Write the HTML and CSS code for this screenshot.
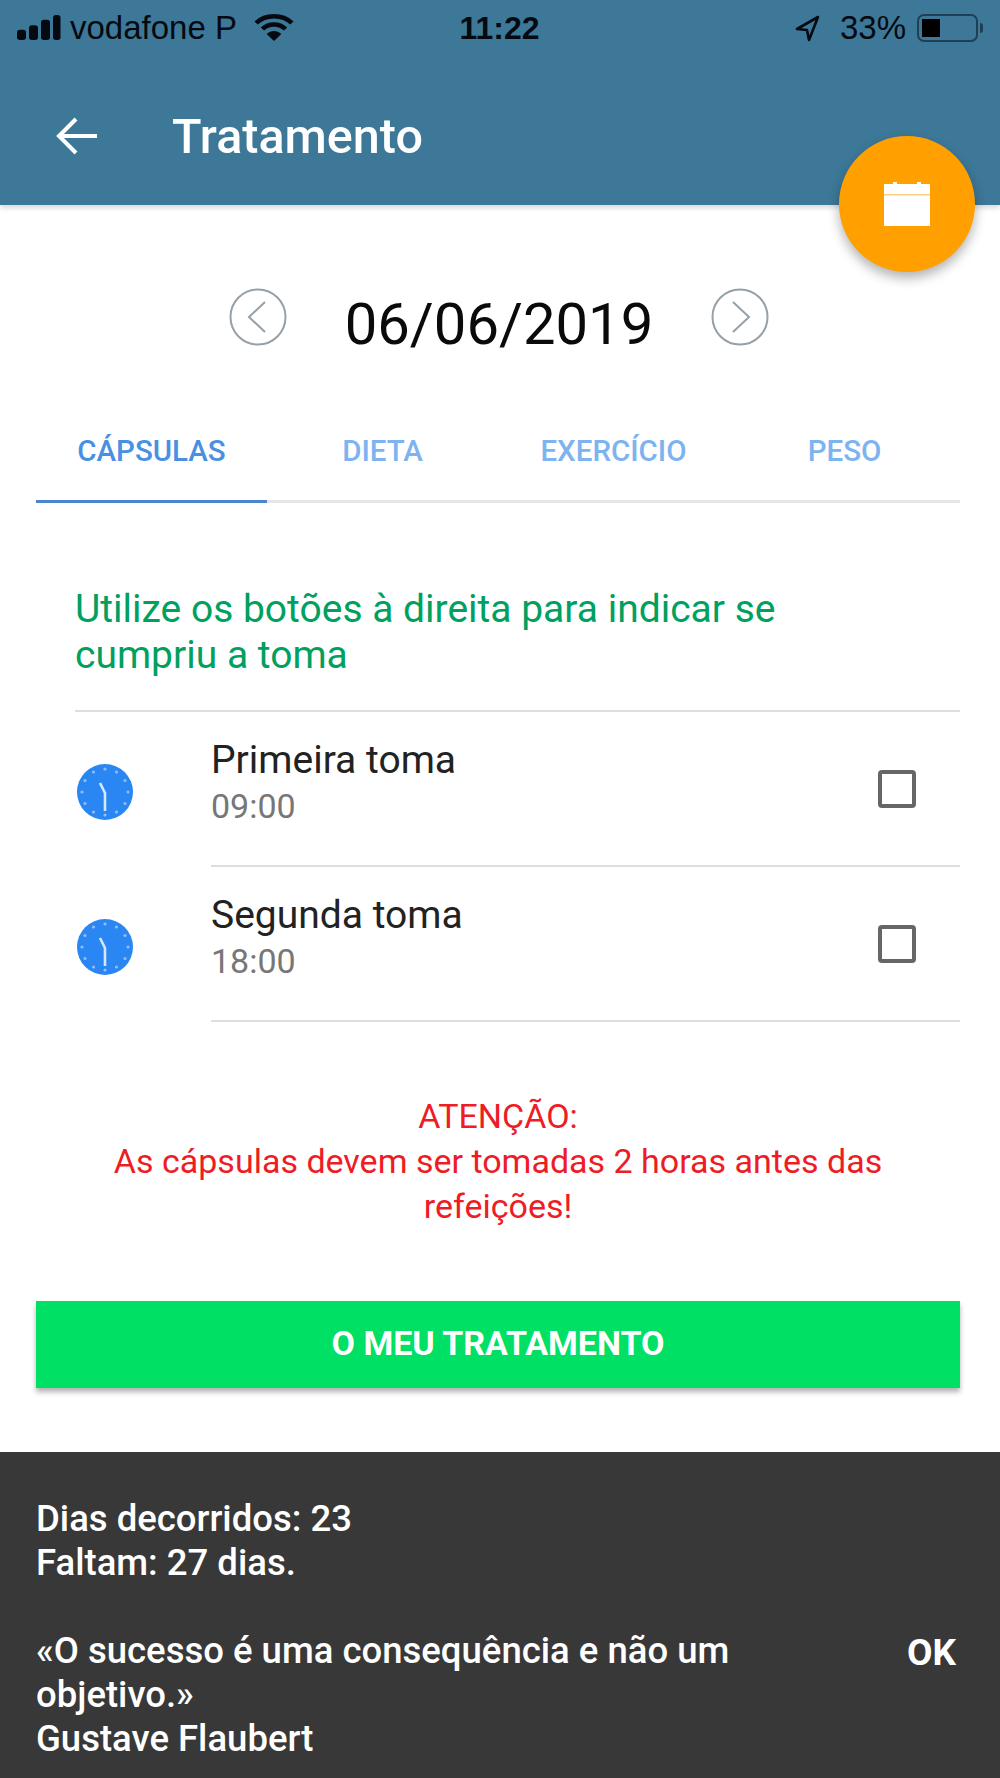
FILE: index.html
```html
<!DOCTYPE html>
<html lang="pt">
<head>
    <meta charset="UTF-8">
    <title>Tratamento</title>
    <link rel="stylesheet" href="styles.css">
</head>
<body>
    <header class="topo">
        <!-- Barra de estado -->
        <div class="estado">
            <div class="estado-lado">
                <svg class="sinal" width="45" height="26" viewBox="0 0 45 28" preserveAspectRatio="none">
                    <rect x="1" y="16" width="9" height="11" rx="3"/>
                    <rect x="13" y="11" width="9" height="16" rx="3"/>
                    <rect x="25" y="5" width="9" height="22" rx="3"/>
                    <rect x="37" y="0" width="7.5" height="27" rx="3"/>
                </svg>
                <span class="operadora">vodafone P</span>
                <svg class="wifi" width="40" height="28" viewBox="0 0 38 28" preserveAspectRatio="none">
                    <path d="M2 9 C11 0 27 0 36 9" fill="none" stroke="#050a10" stroke-width="4.5"/>
                    <path d="M8 15 C14 9 24 9 30 15" fill="none" stroke="#050a10" stroke-width="4.5"/>
                    <path d="M12 20 C16 16 22 16 26 20 L19 27 Z" fill="#050a10"/>
                </svg>
            </div>
            <div class="hora">11:22</div>
            <div class="estado-lado direita">
                <svg class="local" width="26" height="28" viewBox="0 0 26 28">
                    <path d="M24 3 L3 15 L13 16 L15 26 Z" fill="none" stroke="#050a10" stroke-width="2.6" stroke-linejoin="round"/>
                </svg>
                <span class="bateria-pct">33%</span>
                <div class="bateria"><div class="bateria-nivel"></div></div>
                <div class="bateria-ponta"></div>
            </div>
        </div>
        <div class="barra">
            <svg class="voltar" width="42" height="40" viewBox="0 0 42 40">
                <path d="M20 3 L3 20 L20 37 M3 20 L41 20" fill="none" stroke="#fff" stroke-width="4"/>
            </svg>
            <h1>Tratamento</h1>
        </div>
        <button class="fab" type="button">
            <svg width="46" height="44" viewBox="0 0 46 44">
                <rect x="0" y="2" width="46" height="42" fill="#fff"/>
                <rect x="0" y="12" width="46" height="1.5" fill="#ffcf80"/>
                <rect x="9" y="0" width="4" height="5" fill="#fff"/>
                <rect x="33" y="0" width="4" height="5" fill="#fff"/>
            </svg>
        </button>
    </header>

    <main class="conteudo">
        <div class="data">
            <div class="seta">
                <svg width="58" height="58" viewBox="0 0 58 58">
                    <circle cx="29" cy="29" r="27.5" fill="none" stroke="#96a0a8" stroke-width="2"/>
                    <path d="M36 14 L20 29 L36 44" fill="none" stroke="#96a0a8" stroke-width="2"/>
                </svg>
            </div>
            <div class="data-texto">06/06/2019</div>
            <div class="seta">
                <svg width="58" height="58" viewBox="0 0 58 58">
                    <circle cx="29" cy="29" r="27.5" fill="none" stroke="#96a0a8" stroke-width="2"/>
                    <path d="M22 14 L38 29 L22 44" fill="none" stroke="#96a0a8" stroke-width="2"/>
                </svg>
            </div>
        </div>

        <nav class="tabs">
            <div class="tab ativo">CÁPSULAS</div>
            <div class="tab">DIETA</div>
            <div class="tab">EXERCÍCIO</div>
            <div class="tab">PESO</div>
        </nav>

        <p class="instrucao">Utilize os botões à direita para indicar se cumpriu a toma</p>

        <ul class="lista">
            <li class="toma">
                <svg class="relogio" width="56" height="56" viewBox="0 0 56 56">
                    <circle cx="28" cy="28" r="28" fill="#2a86f2"/>
                    <g fill="#8fbdf6">
                        <circle cx="28" cy="5" r="1.6"/><circle cx="28" cy="51" r="1.6"/>
                        <circle cx="5" cy="28" r="1.6"/><circle cx="51" cy="28" r="1.6"/>
                        <circle cx="16.500" cy="8" r="1.6"/><circle cx="39.500" cy="8" r="1.6"/>
                        <circle cx="16.500" cy="48" r="1.6"/><circle cx="39.500" cy="48" r="1.6"/>
                        <circle cx="8" cy="16.500" r="1.6"/><circle cx="48" cy="16.500" r="1.6"/>
                        <circle cx="8" cy="39.500" r="1.6"/><circle cx="48" cy="39.500" r="1.6"/>
                    </g>
                    <path d="M23 19 L28 29 L28 47" fill="none" stroke="#d6e8fc" stroke-width="2.6"/>
                </svg>
                <div class="toma-texto">
                    <div class="toma-titulo">Primeira toma</div>
                    <div class="toma-hora">09:00</div>
                </div>
                <div class="caixa"></div>
            </li>
            <li class="toma">
                <svg class="relogio" width="56" height="56" viewBox="0 0 56 56">
                    <circle cx="28" cy="28" r="28" fill="#2a86f2"/>
                    <g fill="#8fbdf6">
                        <circle cx="28" cy="5" r="1.6"/><circle cx="28" cy="51" r="1.6"/>
                        <circle cx="5" cy="28" r="1.6"/><circle cx="51" cy="28" r="1.6"/>
                        <circle cx="16.500" cy="8" r="1.6"/><circle cx="39.500" cy="8" r="1.6"/>
                        <circle cx="16.500" cy="48" r="1.6"/><circle cx="39.500" cy="48" r="1.6"/>
                        <circle cx="8" cy="16.500" r="1.6"/><circle cx="48" cy="16.500" r="1.6"/>
                        <circle cx="8" cy="39.500" r="1.6"/><circle cx="48" cy="39.500" r="1.6"/>
                    </g>
                    <path d="M23 19 L28 29 L28 47" fill="none" stroke="#d6e8fc" stroke-width="2.6"/>
                </svg>
                <div class="toma-texto">
                    <div class="toma-titulo">Segunda toma</div>
                    <div class="toma-hora">18:00</div>
                </div>
                <div class="caixa"></div>
            </li>
        </ul>

        <p class="aviso">ATENÇÃO:<br>As cápsulas devem ser tomadas 2 horas antes das refeições!</p>

        <button class="botao" type="button">O MEU TRATAMENTO</button>
    </main>

    <footer class="rodape">
        <div class="rodape-texto">
            Dias decorridos: 23<br>
            Faltam: 27 dias.<br>
            <br>
            «O sucesso é uma consequência e não um objetivo.»<br>
            Gustave Flaubert
        </div>
        <div class="ok">OK</div>
    </footer>
</body>
</html>
```

FILE: styles.css
```css
* {
    box-sizing: border-box;
}

html, body {
    margin: 0;
    padding: 0;
}

body {
    width: 1000px;
    height: 1778px;
    overflow: hidden;
    font-family: Roboto, "Liberation Sans", sans-serif;
    background-color: #ffffff;
    display: flex;
    flex-direction: column;
}

/* Topo */
.topo {
    position: relative;
    height: 205px;
    background-color: #3d7898;
    box-shadow: 0 3px 5px rgba(0, 0, 0, 0.15);
    flex-shrink: 0;
    z-index: 2;
}

.estado {
    height: 56px;
    padding: 0 17px 0 16px;
    display: flex;
    justify-content: space-between;
    align-items: center;
    color: #050a10;
    font-family: "Liberation Sans", sans-serif;
    font-size: 33px;
}

.estado-lado {
    width: 330px;
    display: flex;
    align-items: center;
}

.direita {
    justify-content: flex-end;
}

.sinal {
    fill: #050a10;
    margin-right: 9px;
}

.wifi {
    margin-left: 17px;
}

.hora {
    font-weight: 700;
    font-size: 32px;
}

.local {
    margin-right: 20px;
}

.bateria-pct {
    margin-right: 11px;
}

.bateria {
    width: 61px;
    height: 28px;
    border: 2px solid #1f3f55;
    border-radius: 7px;
    padding: 3px;
}

.bateria-nivel {
    width: 18px;
    height: 100%;
    background-color: #000000;
}

.bateria-ponta {
    width: 3px;
    height: 10px;
    margin-left: 2px;
    background-color: #1f3f55;
    border-radius: 0 3px 3px 0;
}

.barra {
    height: 112px;
    margin-top: 24px;
    padding-left: 56px;
    display: flex;
    align-items: center;
}

.voltar {
    flex-shrink: 0;
}

.barra h1 {
    margin: 0 0 0 74px;
    font-size: 48.5px;
    font-weight: 500;
    color: #ffffff;
}

.fab {
    position: absolute;
    left: 839px;
    top: 136px;
    width: 136px;
    height: 136px;
    border: none;
    border-radius: 50%;
    background-color: #ff9f00;
    box-shadow: 0 6px 12px rgba(0, 0, 0, 0.3);
    padding: 0;
    display: flex;
    align-items: center;
    justify-content: center;
}

/* Conteudo */
.conteudo {
    flex: 1;
    padding: 0 40px 0 36px;
}

.data {
    height: 152px;
    padding: 76px 0 0 193px;
    display: flex;
    align-items: center;
}

.data-texto {
    width: 424px;
    padding-top: 9px;
    text-align: center;
    font-size: 58px;
    color: #0a0a0a;
}

.tabs {
    display: flex;
    height: 146px;
    padding-top: 48px;
    border-bottom: 3px solid #e6e6e8;
}

.tab {
    width: 231px;
    height: 98px;
    margin-bottom: -3px;
    padding-top: 29px;
    text-align: center;
    font-size: 29.5px;
    font-weight: 500;
    color: #7db3f0;
}

.tab.ativo {
    color: #4a90e2;
    border-bottom: 3px solid #4a86d0;
}

.instrucao {
    margin: 83px 60px 0 39px;
    font-size: 39px;
    line-height: 46px;
    color: #00a05f;
}

.lista {
    list-style: none;
    margin: 32px 0 0 39px;
    padding: 0;
    border-top: 2px solid #dedede;
}

.toma {
    display: flex;
    align-items: center;
    height: 155px;
    position: relative;
}

.toma::after {
    content: "";
    position: absolute;
    left: 136px;
    right: 0;
    bottom: 0;
    height: 2px;
    background-color: #dedede;
}

.relogio {
    flex-shrink: 0;
    margin: 0 0 -4px 2px;
}

.toma-texto {
    margin-left: 78px;
    flex: 1;
    padding-bottom: 14px;
}

.toma-titulo {
    font-size: 39px;
    line-height: 46px;
    color: #222222;
}

.toma-hora {
    font-size: 34px;
    line-height: 46px;
    color: #777777;
}

.caixa {
    width: 38px;
    height: 38px;
    margin: 0 44px 2px 0;
    border: 4px solid #666666;
    border-radius: 4px;
}

.aviso {
    margin: 72px 60px 0 60px;
    text-align: center;
    font-size: 34px;
    line-height: 45px;
    color: #ee1c25;
}

.botao {
    display: block;
    width: 100%;
    height: 87px;
    margin-top: 72px;
    padding: 0 0 4px;
    border: none;
    background-color: #00e064;
    box-shadow: 0 4px 5px rgba(0, 0, 0, 0.3);
    color: #ffffff;
    font-family: Roboto, sans-serif;
    font-size: 34px;
    font-weight: 700;
}

/* Rodape */
.rodape {
    height: 326px;
    flex-shrink: 0;
    padding: 45px 36px 0;
    background-color: #383838;
    display: flex;
    color: #ffffff;
}

.rodape-texto {
    width: 730px;
    font-size: 36.5px;
    font-weight: 500;
    line-height: 44px;
}

.ok {
    margin: 134px 0 0 auto;
    font-size: 37px;
    font-weight: 700;
    padding-right: 8px;
}
```
